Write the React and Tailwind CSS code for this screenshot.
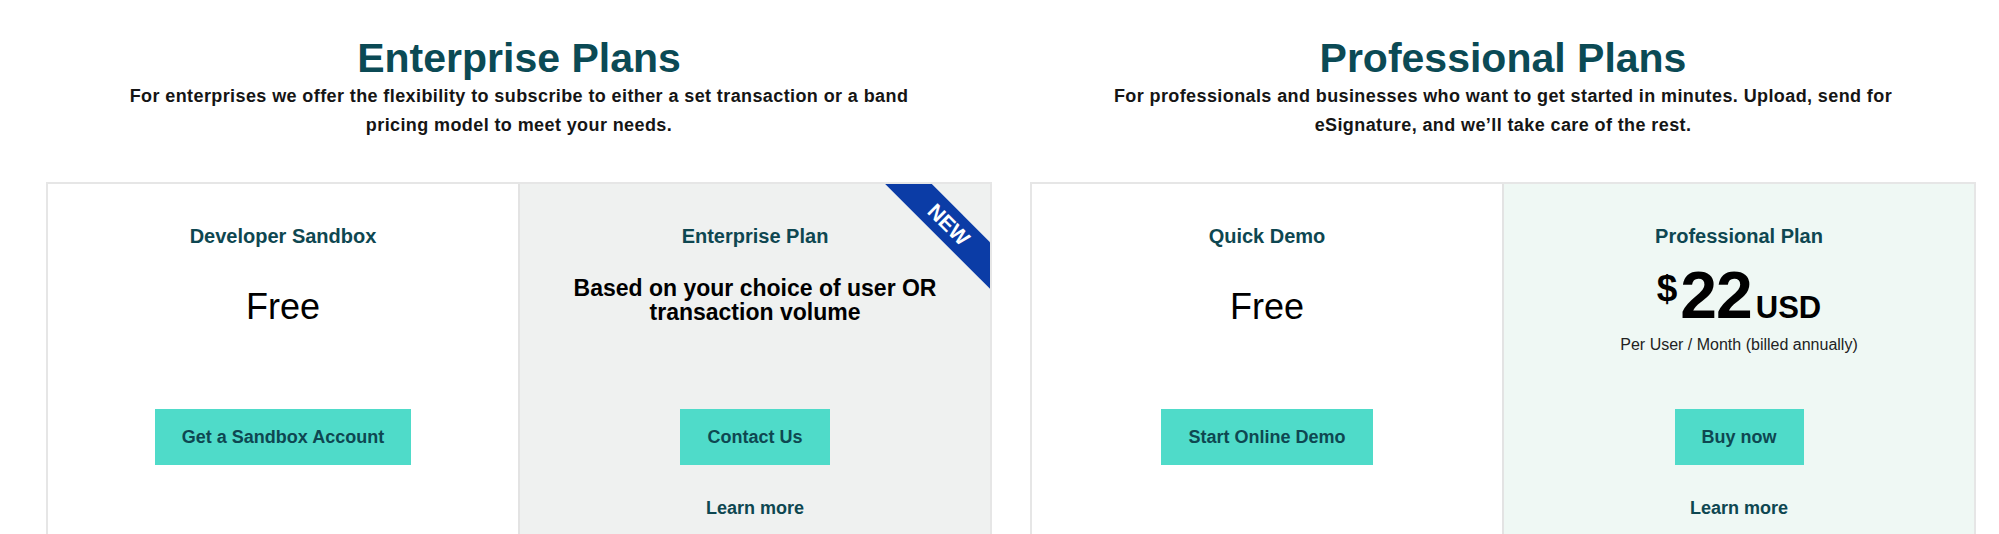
import React from "react";

const plansFont = { fontFamily: "'Liberation Sans', Arial, sans-serif" };

function PlanButton({ children }) {
  return (
    <button className="h-14 px-[27px] bg-[#4fdbc9] text-[#0e4751] text-[18px] font-bold leading-none">
      {children}
    </button>
  );
}

function LearnMore() {
  return (
    <a href="#" className="mt-[31px] text-[18px] leading-6 font-bold text-[#0e4751]">
      Learn more
    </a>
  );
}

function PlanColumn({ title, bg = "bg-white", border = "", children, button, learnMore, ribbon }) {
  return (
    <div className={`relative flex-1 flex flex-col items-center pt-[40px] h-[400px] overflow-hidden ${bg} ${border}`}>
      {ribbon && (
        <div className="absolute top-[24px] right-[-44px] w-[170px] h-[33px] rotate-45 bg-[#0b3ca6] flex items-center justify-center">
          <span className="text-white text-[21px] font-bold">NEW</span>
        </div>
      )}
      <h3 className="text-[20px] leading-6 font-bold text-[#0e4751]">{title}</h3>
      <div className="h-[161px] w-full flex flex-col items-center">{children}</div>
      <PlanButton>{button}</PlanButton>
      {learnMore && <LearnMore />}
    </div>
  );
}

function Section({ heading, text, children }) {
  return (
    <section className="flex-1 flex flex-col items-center">
      <h2 className="mt-[36px] text-[41px] leading-[44px] font-bold text-[#0b4a55]">{heading}</h2>
      <p className="mt-[2px] max-w-[810px] text-center text-[18px] leading-[29px] font-bold tracking-[0.4px] text-[#151515]">
        {text}
      </p>
      <div className="mt-[42px] w-full flex border-2 border-[#e6e6e6] border-b-0">{children}</div>
    </section>
  );
}

export default function App() {
  return (
    <div className="w-full h-[534px] overflow-hidden bg-white flex gap-[38px] pl-[46px] pr-[23px]" style={plansFont}>
      <Section
        heading="Enterprise Plans"
        text="For enterprises we offer the flexibility to subscribe to either a set transaction or a band pricing model to meet your needs."
      >
        <PlanColumn title="Developer Sandbox" button="Get a Sandbox Account">
          <div className="mt-[37px] text-[36px] leading-[44px] text-black">Free</div>
        </PlanColumn>
        <PlanColumn
          title="Enterprise Plan"
          bg="bg-[#eff1f0]"
          border="border-l-2 border-[#e3e3e3]"
          button="Contact Us"
          learnMore
          ribbon
        >
          <p className="mt-[28px] max-w-[400px] text-center text-[23px] leading-6 font-bold text-black">
            Based on your choice of user OR transaction volume
          </p>
        </PlanColumn>
      </Section>

      <Section
        heading="Professional Plans"
        text="For professionals and businesses who want to get started in minutes. Upload, send for eSignature, and we’ll take care of the rest."
      >
        <PlanColumn title="Quick Demo" button="Start Online Demo">
          <div className="mt-[37px] text-[36px] leading-[44px] text-black">Free</div>
        </PlanColumn>
        <PlanColumn
          title="Professional Plan"
          bg="bg-[#eff8f4]"
          border="border-l-2 border-[#e3e3e3]"
          button="Buy now"
          learnMore
        >
          <div className="mt-[16px] flex items-baseline text-black">
            <span className="self-start mt-[6px] text-[37px] leading-none font-bold">$</span>
            <span className="ml-[3px] text-[66px] leading-[62px] font-bold tracking-[-1px]">22</span>
            <span className="ml-[4px] text-[31px] leading-none font-bold">USD</span>
          </div>
          <p className="mt-[9px] text-[16px] leading-5 text-[#222]">Per User / Month (billed annually)</p>
        </PlanColumn>
      </Section>
    </div>
  );
}
